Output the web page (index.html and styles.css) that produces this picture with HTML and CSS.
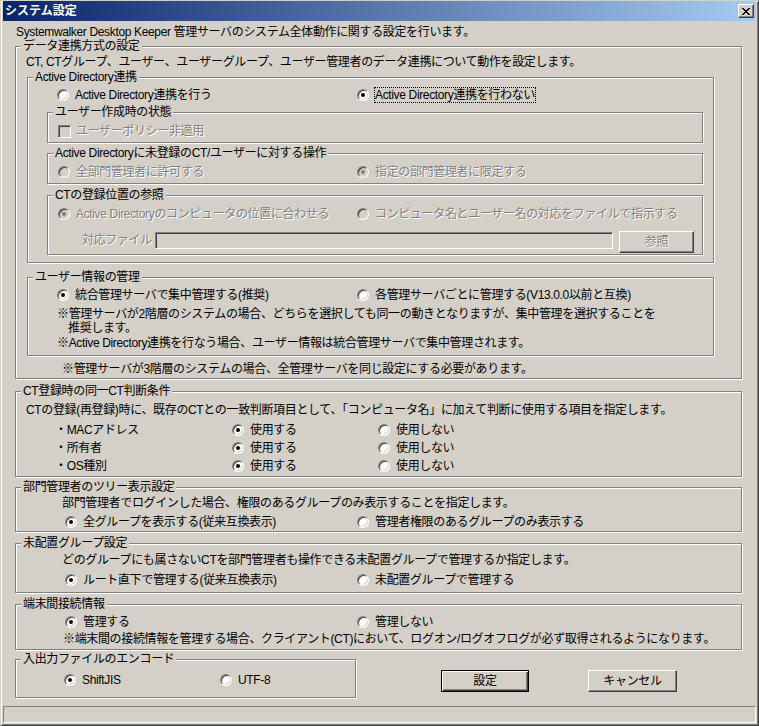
FILE: index.html
```html
<!DOCTYPE html>
<html lang="ja">
<head>
<meta charset="utf-8">
<title>システム設定</title>
<link rel="stylesheet" href="styles.css">
</head>
<body>
<div class="window">
  <div class="titlebar">
    <span class="title">システム設定</span>
    <span class="close" aria-label="閉じる"><svg width="8" height="7" viewBox="0 0 8 7" shape-rendering="crispEdges"><path fill="#000" d="M0 0h2v1h-2z M6 0h2v1h-2z M1 1h2v1h-2z M5 1h2v1h-2z M2 2h4v1h-4z M3 3h2v1h-2z M2 4h4v1h-4z M1 5h2v1h-2z M5 5h2v1h-2z M0 6h2v1h-2z M6 6h2v1h-2z"/></svg></span>
  </div>

  <div class="content">
    <p class="intro">Systemwalker Desktop Keeper 管理サーバのシステム全体動作に関する設定を行います。</p>

    <section class="group g-data">
      <div class="legend">データ連携方式の設定</div>
      <p class="desc">CT, CTグループ、ユーザー、ユーザーグループ、ユーザー管理者のデータ連携について動作を設定します。</p>

      <div class="group g-ad">
        <div class="legend">Active Directory連携</div>
        <div class="row r-ad">
          <div class="opt c300"><span class="radio"></span><span class="lbl">Active Directory連携を行う</span></div>
          <div class="opt"><span class="radio on"></span><span class="lbl focus">Active Directory連携を行わない</span></div>
        </div>

        <div class="group g-sub g-state">
          <div class="legend">ユーザー作成時の状態</div>
          <div class="row r-sub">
            <div class="opt dis"><span class="check"></span><span class="lbl">ユーザーポリシー非適用</span></div>
          </div>
        </div>

        <div class="group g-sub g-unreg">
          <div class="legend">Active Directoryに未登録のCT/ユーザーに対する操作</div>
          <div class="row r-sub">
            <div class="opt dis c299"><span class="radio"></span><span class="lbl">全部門管理者に許可する</span></div>
            <div class="opt dis"><span class="radio on"></span><span class="lbl">指定の部門管理者に限定する</span></div>
          </div>
        </div>

        <div class="group g-sub g-loc">
          <div class="legend">CTの登録位置の参照</div>
          <div class="row r-sub">
            <div class="opt dis c299"><span class="radio on"></span><span class="lbl">Active Directoryのコンピュータの位置に合わせる</span></div>
            <div class="opt dis"><span class="radio"></span><span class="lbl">コンピュータ名とユーザー名の対応をファイルで指示する</span></div>
          </div>
          <div class="file-row">
            <span class="file-label dis">対応ファイル</span>
            <span class="textbox"></span>
            <span class="btn btn-ref dis">参照</span>
          </div>
        </div>
      </div>

      <div class="group g-userinfo">
        <div class="legend">ユーザー情報の管理</div>
        <div class="row r-ui">
          <div class="opt c300"><span class="radio on"></span><span class="lbl">統合管理サーバで集中管理する(推奨)</span></div>
          <div class="opt"><span class="radio"></span><span class="lbl">各管理サーバごとに管理する(V13.0.0以前と互換)</span></div>
        </div>
        <p class="note n1">※管理サーバが2階層のシステムの場合、どちらを選択しても同一の動きとなりますが、集中管理を選択することを</p>
        <p class="note n1b">推奨します。</p>
        <p class="note n2">※Active Directory連携を行なう場合、ユーザー情報は統合管理サーバで集中管理されます。</p>
      </div>
      <p class="note n3">※管理サーバが3階層のシステムの場合、全管理サーバを同じ設定にする必要があります。</p>
    </section>

    <section class="group g-judge">
      <div class="legend">CT登録時の同一CT判断条件</div>
      <p class="desc">CTの登録(再登録)時に、既存のCTとの一致判断項目として、「コンピュータ名」に加えて判断に使用する項目を指定します。</p>
      <div class="judge">
        <div class="jrow">
          <span class="jlabel">・MACアドレス</span>
          <div class="opt c146"><span class="radio on"></span><span class="lbl">使用する</span></div>
          <div class="opt"><span class="radio"></span><span class="lbl">使用しない</span></div>
        </div>
        <div class="jrow">
          <span class="jlabel">・所有者</span>
          <div class="opt c146"><span class="radio on"></span><span class="lbl">使用する</span></div>
          <div class="opt"><span class="radio"></span><span class="lbl">使用しない</span></div>
        </div>
        <div class="jrow">
          <span class="jlabel">・OS種別</span>
          <div class="opt c146"><span class="radio on"></span><span class="lbl">使用する</span></div>
          <div class="opt"><span class="radio"></span><span class="lbl">使用しない</span></div>
        </div>
      </div>
    </section>

    <section class="group g-tree">
      <div class="legend">部門管理者のツリー表示設定</div>
      <p class="desc2">部門管理者でログインした場合、権限のあるグループのみ表示することを指定します。</p>
      <div class="row r-low">
        <div class="opt c292"><span class="radio on"></span><span class="lbl">全グループを表示する(従来互換表示)</span></div>
        <div class="opt"><span class="radio"></span><span class="lbl">管理者権限のあるグループのみ表示する</span></div>
      </div>
    </section>

    <section class="group g-unplaced">
      <div class="legend">未配置グループ設定</div>
      <p class="desc2">どのグループにも属さないCTを部門管理者も操作できる未配置グループで管理するか指定します。</p>
      <div class="row r-low">
        <div class="opt c292"><span class="radio on"></span><span class="lbl">ルート直下で管理する(従来互換表示)</span></div>
        <div class="opt"><span class="radio"></span><span class="lbl">未配置グループで管理する</span></div>
      </div>
    </section>

    <section class="group g-conn">
      <div class="legend">端末間接続情報</div>
      <div class="row r-low">
        <div class="opt c292"><span class="radio on"></span><span class="lbl">管理する</span></div>
        <div class="opt"><span class="radio"></span><span class="lbl">管理しない</span></div>
      </div>
      <p class="desc3">※端末間の接続情報を管理する場合、クライアント(CT)において、ログオン/ログオフログが必ず取得されるようになります。</p>
    </section>

    <div class="bottom-row">
      <section class="group g-enc">
        <div class="legend">入出力ファイルのエンコード</div>
        <div class="row r-enc">
          <div class="opt c156"><span class="radio on"></span><span class="lbl">ShiftJIS</span></div>
          <div class="opt"><span class="radio"></span><span class="lbl">UTF-8</span></div>
        </div>
      </section>
      <span class="btn btn-default btn-ok">設定</span>
      <span class="btn btn-cancel">キャンセル</span>
    </div>
  </div>

  <div class="statusbar"></div>
</div>
</body>
</html>
```

FILE: styles.css
```css
* { box-sizing: border-box; }
html, body { margin: 0; padding: 0; }
body {
  width: 759px;
  height: 726px;
  overflow: hidden;
  background: #d4d0c8;
  font-family: "Liberation Sans", "Noto Sans CJK JP", sans-serif;
  font-size: 12px;
  line-height: 14px;
  letter-spacing: -0.35px;
  color: #000;
}
p { margin: 0; white-space: nowrap; }

.window {
  width: 759px;
  height: 726px;
  display: flex;
  flex-direction: column;
  border: 1px solid;
  border-color: #d4d0c8 #404040 #404040 #d4d0c8;
  box-shadow: inset 1px 1px 0 #fff, inset -1px -1px 0 #808080;
  padding: 0 2px 2px;
}

.titlebar {
  flex: none;
  height: 20px;
  display: flex;
  align-items: center;
  justify-content: space-between;
  padding: 0 2px;
  background: linear-gradient(to right, #0a246a, #a6caf0);
}
.title { color: #fff; font-weight: bold; letter-spacing: 0; }
.close {
  width: 16px;
  height: 14px;
  display: flex;
  align-items: center;
  justify-content: center;
  background: #d4d0c8;
  border: 1px solid;
  border-color: #fff #404040 #404040 #fff;
  box-shadow: inset -1px -1px 0 #808080;
}

.content { padding-left: 12px; }
.intro { margin-top: 4px; padding-left: 1px; }

/* group box (etched frame) */
.group {
  border: 1px solid #808080;
  box-shadow: inset 1px 1px 0 #fff, 1px 1px 0 #fff;
}
.legend {
  width: max-content;
  height: 14px;
  margin: -8px 0 0 5px;
  padding: 0 2px;
  background: #d4d0c8;
  white-space: nowrap;
}

.row { display: flex; height: 14px; }
.opt { display: flex; align-items: center; flex: none; white-space: nowrap; }
.c300 { width: 300px; }
.c299 { width: 299px; }
.c292 { width: 292px; }
.c146 { width: 146px; }
.c156 { width: 156px; }

.lbl { border: 1px solid transparent; line-height: 14px; }
.lbl.focus { border: 1px dotted #000; }

.radio {
  position: relative;
  flex: none;
  width: 12px;
  height: 12px;
  margin-right: 5px;
  border-radius: 50%;
  border: 1px solid;
  border-color: #808080 #fff #fff #808080;
  background: #fff;
  box-shadow: inset 1px 1px 0 #404040, inset -1px -1px 0 #d4d0c8;
}
.radio.on::after {
  content: "";
  position: absolute;
  left: 3px;
  top: 3px;
  width: 4px;
  height: 4px;
  border-radius: 50%;
  background: #000;
}
.check {
  flex: none;
  width: 13px;
  height: 13px;
  margin-right: 4px;
  border: 1px solid;
  border-color: #808080 #fff #fff #808080;
  background: #fff;
  box-shadow: inset 1px 1px 0 #404040, inset -1px -1px 0 #d4d0c8;
}

.dis { color: #808080; text-shadow: 1px 1px 0 #fff; }
.dis .radio, .dis .check { background: #d4d0c8; }
.dis .radio.on::after { background: #808080; }

.btn {
  display: flex;
  align-items: center;
  justify-content: center;
  flex: none;
  height: 22px;
  background: #d4d0c8;
  border: 1px solid;
  border-color: #fff #404040 #404040 #fff;
  box-shadow: inset -1px -1px 0 #808080;
  white-space: nowrap;
}
.btn-default {
  border-color: #000;
  box-shadow: inset 1px 1px 0 #fff, inset -1px -1px 0 #404040, inset -2px -2px 0 #808080;
}

/* データ連携方式の設定 */
.g-data { width: 727px; margin-top: 7px; padding-bottom: 2px; }
.g-data > .desc { margin-top: 2px; padding-left: 10px; }

.g-ad { width: 687px; margin: 8px 0 0 11px; padding-bottom: 7px; }
.r-ad { margin-top: 4px; padding-left: 29px; }

.g-sub { width: 656px; margin-left: 19px; }
.r-sub { margin-top: 5px; padding-left: 10px; }
.g-state { margin-top: 10px; padding-bottom: 4px; }
.g-unreg { margin-top: 10px; padding-bottom: 4px; }
.g-loc { margin-top: 11px; padding-bottom: 1px; }

.file-row { display: flex; align-items: flex-start; margin-top: 10px; padding-left: 34px; }
.file-label { width: 73px; margin-top: 2px; }
.textbox {
  width: 458px;
  height: 17px;
  margin-top: 1px;
  border: 1px solid;
  border-color: #808080 #fff #fff #808080;
  box-shadow: inset 1px 1px 0 #404040, inset -1px -1px 0 #d4d0c8;
  background: #d4d0c8;
}
.btn-ref { width: 75px; margin-left: 6px; }

.g-userinfo { width: 687px; margin: 14px 0 0 11px; padding-bottom: 5px; }
.r-ui { margin-top: 4px; padding-left: 29px; }
.note { padding-left: 29px; }
.n1 { margin-top: 5px; }
.n1b { padding-left: 40px; }
.n2 { margin-top: 1px; }
.n3 { margin-top: 6px; padding-left: 46px; }

/* CT登録時の同一CT判断条件 */
.g-judge { width: 727px; margin-top: 12px; padding-bottom: 1px; }
.g-judge > .desc { margin-top: 5px; padding-left: 10px; }
.judge { margin-top: 4px; padding-left: 39px; }
.jrow { display: flex; align-items: center; height: 18px; }
.jlabel { width: 177px; flex: none; }

/* lower groups */
.desc2 { padding-left: 46px; }
.r-low { padding-left: 49px; }

.g-tree { width: 727px; margin-top: 10px; padding-bottom: 2px; }
.g-tree > .desc2 { margin-top: 2px; }
.g-tree > .r-low { margin-top: 5px; }

.g-unplaced { width: 727px; margin-top: 11px; padding-bottom: 5px; }
.g-unplaced > .desc2 { margin-top: 3px; }
.g-unplaced > .r-low { margin-top: 6px; }

.g-conn { width: 727px; margin-top: 11px; padding-bottom: 3px; }
.g-conn > .r-low { margin-top: 4px; }
.desc3 { margin-top: 3px; padding-left: 47px; }

.bottom-row { display: flex; align-items: flex-start; margin-top: 9px; }
.g-enc { width: 341px; padding-bottom: 10px; }
.r-enc { margin-top: 7px; padding-left: 48px; }
.btn-ok { width: 88px; margin: 11px 0 0 85px; }
.btn-cancel { width: 89px; margin: 11px 0 0 59px; }

.statusbar {
  flex: none;
  height: 17px;
  margin-top: auto;
  border: 1px solid;
  border-color: #808080 #fff #fff #808080;
}
```
